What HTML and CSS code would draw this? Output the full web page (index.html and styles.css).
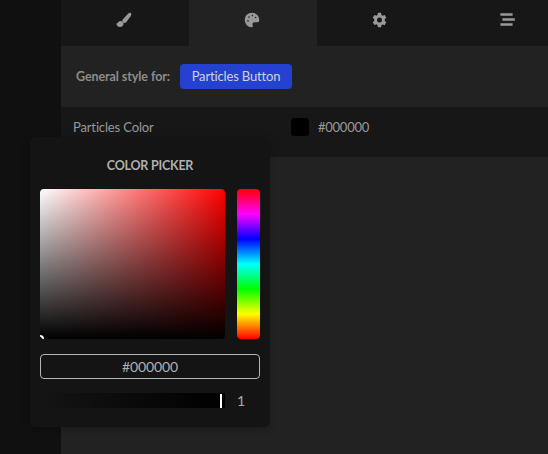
FILE: index.html
```
<!DOCTYPE html>
<html lang="en">
<head>
<meta charset="utf-8">
<title>Style editor</title>
<link rel="stylesheet" href="styles.css">
</head>
<body>
<div class="app">
  <aside class="rail"></aside>
  <main class="panel">
    <nav class="tabs">
      <div class="tab"><svg width="16" height="16" viewBox="0 0 16 16"><path d="M14.700 1.100c.9.7.7 1.900.1 2.800L10.400 10c-.9 1.200-2.600 1.100-3.400.3-.9-.8-.9-2.300.1-3.300L12.300 1.500c.7-.7 1.700-.9 2.400-.4z"/><path d="M4 9c2-.2 3.700 1.100 3.500 3.100-.2 2.600-2.800 3.300-4.900 2.700C1.300 14.400.5 13 .4 11.300c1.400.7 1.700-2 3.600-2.300z"/></svg></div>
      <div class="tab active"><svg width="16" height="16" viewBox="0 0 16 16"><path fill-rule="evenodd" d="M8 .8C3.900.8.800 3.900.8 8s3.200 7.200 6.700 7.200c1.400 0 1.700-.9 1.200-2-.7-1.600.2-3 1.900-3h2.800c1.200 0 1.900-.7 1.900-2C15.200 3.900 12 .8 8 .8zM4 9.700a.8.800 0 1 1 0-1.600.8.800 0 0 1 0 1.600zm1-3.800a.8.800 0 1 1 0-1.600.8.800 0 0 1 0 1.600zm3.300-1.500a.8.800 0 1 1 0-1.600.8.800 0 0 1 0 1.600zm3.300 1.900a.8.800 0 1 1 0-1.600.8.800 0 0 1 0 1.600z"/></svg></div>
      <div class="tab"><svg width="16" height="16" viewBox="0 0 16 16"><path fill-rule="evenodd" d="M5.900.8h3.200l.4 2.200 1.100.65 2-.7 1.700 2.850-1.500 1.250v1.900l1.500 1.350-1.700 2.850-2-.7-1.100.65-.4 2.200H5.900L5.500 13l-1.100-.65-2 .7L.7 10.200l1.500-1.250v-1.900L.7 5.800l1.700-2.850 2 .7L5.500 3zM7.500 5.500a2.500 2.500 0 1 0 0 5 2.500 2.500 0 0 0 0-5z"/></svg></div>
      <div class="tab"><svg width="16" height="16" viewBox="0 0 16 16"><path d="M.4 1.200h12.200v2.600H.4zM2.400 6.200h12.400v2.600H2.400zM.4 11.200h12.200v2.600H.4z"/></svg></div>
    </nav>
    <section class="target">
      <span class="target-label">General style for:</span>
      <span class="target-name">Particles Button</span>
    </section>
    <section class="setting">
      <span class="setting-label">Particles Color</span>
      <span class="swatch"></span>
      <span class="setting-value">#000000</span>
    </section>
  </main>
  <div class="picker">
    <h2 class="title">COLOR PICKER</h2>
    <div class="fields">
      <div class="saturation"><span class="cursor"></span></div>
      <div class="hue"></div>
    </div>
    <div class="hex">#000000</div>
    <div class="alpha-row">
      <div class="alpha"><span class="handle"></span></div>
      <span class="alpha-value">1</span>
    </div>
  </div>
</div>
</body>
</html>
```
FILE: styles.css
```
* { box-sizing: border-box; }
body { margin: 0; background: #222; color: #999; font: 13px/18px Lato, "Open Sans", sans-serif; }
.app { position: relative; display: flex; width: 548px; height: 454px; overflow: hidden; }
.rail { width: 61px; flex: none; background: #101010; }
.panel { flex: 1; min-width: 0; background: #222; }
.tabs { display: flex; width: 512px; height: 46px; }
.tab { width: 128px; height: 46px; padding: 12px 0 0 55px; background: #171717; }
.tab.active { background: #222; }
.tab svg { display: block; fill: #999; }
.target { display: flex; align-items: center; height: 61px; padding-left: 15px; gap: 10px; }
.target-label { width: 94px; color: #8c8c8c; font-weight: 700; font-size: 12.500px; letter-spacing: -.08px; white-space: nowrap; }
.target-name { width: 112px; height: 25px; border-radius: 4px; background: #2441cf; color: #d0d2df; line-height: 25px; letter-spacing: -.15px; text-align: center; white-space: nowrap; }
.setting { display: flex; height: 50px; padding: 11px 0 0 12px; background: #171717; }
.setting-label { width: 218px; letter-spacing: -.14px; }
.swatch { width: 18px; height: 18px; margin-right: 9px; border-radius: 3px; background: #000; }
.setting-value { letter-spacing: -.25px; line-height: 19px; }
.picker { position: absolute; left: 30px; top: 137px; width: 240px; height: 290px; padding: 19px 10px 0; border-radius: 5px; background: #141414; box-shadow: 0 2px 10px rgba(0,0,0,.2); }
.title { margin: 0 0 13px; font-size: 12.500px; line-height: 20px; font-weight: 700; text-align: center; color: #b0b0b0; letter-spacing: -.22px; }
.fields { display: flex; gap: 12px; height: 150px; }
.saturation { position: relative; width: 185px; border-radius: 4px; overflow: hidden; background: linear-gradient(to top, #000, transparent), linear-gradient(to right, #fff, red); }
.cursor { position: absolute; left: -4px; bottom: -4px; width: 8px; height: 8px; border: 2px solid #fff; border-radius: 50%; }
.hue { width: 23px; border-radius: 4px; background: linear-gradient(to bottom, red, #f0f, blue, #0ff, lime, #ff0, red); }
.hex { height: 25px; margin-top: 15px; border: 1px solid #b5b5b5; border-radius: 4px; color: #b0b0b0; font-size: 14px; line-height: 23px; letter-spacing: -.1px; text-align: center; }
.alpha-row { display: flex; gap: 12px; height: 15px; margin-top: 14px; }
.alpha { position: relative; width: 185px; background: linear-gradient(to right, transparent, #000); }
.handle { position: absolute; right: 3px; top: 1px; width: 2px; height: 14px; background: #fff; }
.alpha-value { font-size: 14px; line-height: 15px; color: #aaa; }
```
